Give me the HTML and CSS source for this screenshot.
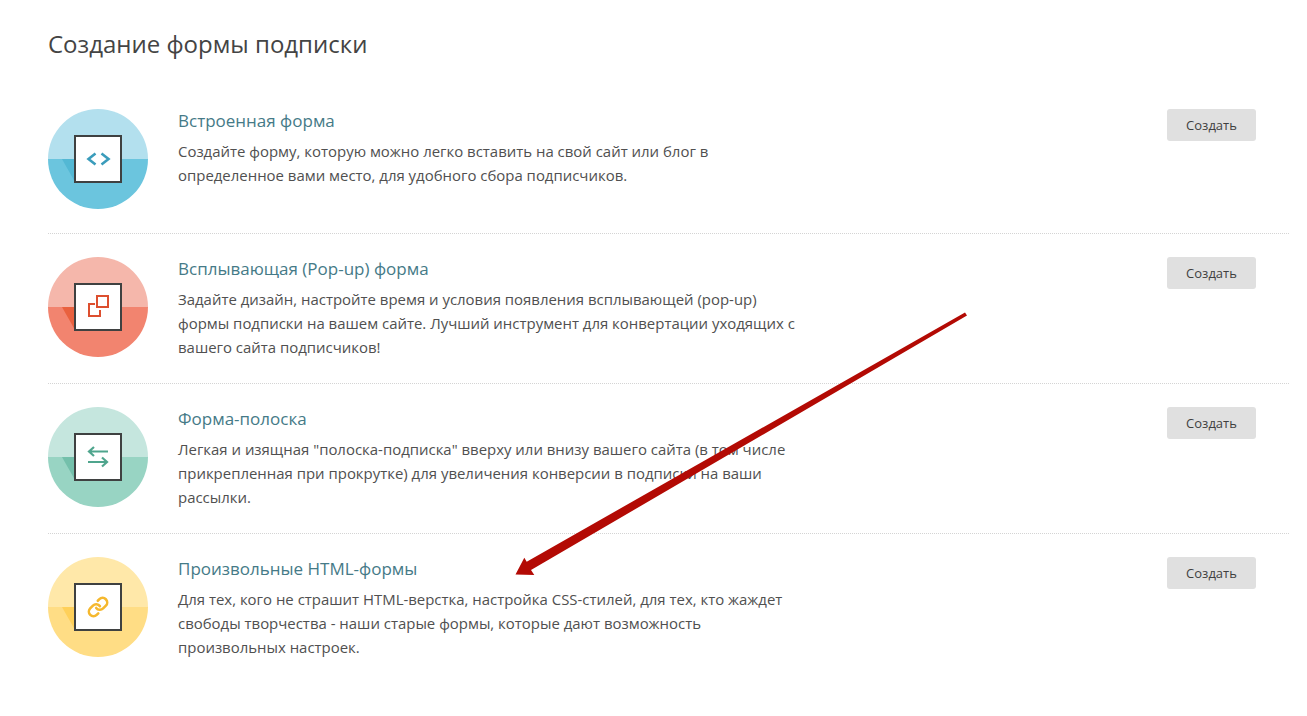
FILE: index.html
```html
<!DOCTYPE html>
<html lang="ru">
<head>
<meta charset="utf-8">
<title>Создание формы подписки</title>
<link rel="stylesheet" href="styles.css">
</head>
<body>
<main class="page">
  <h1 class="heading">Создание формы подписки</h1>
  <ul class="list">
    <li class="row">
      <svg class="badge" viewBox="0 0 100 100" width="100" height="100">
        <defs><clipPath id="c1"><circle cx="50" cy="50" r="50"/></clipPath></defs>
        <g clip-path="url(#c1)">
          <rect width="100" height="50" fill="#b3e0ee"/>
          <rect y="50" width="100" height="50" fill="#6bc5de"/>
          <polygon points="14,50 27,50 27,73" fill="#53b8d4"/>
        </g>
        <rect x="27" y="27" width="46" height="46" fill="#fff" stroke="#3f4141" stroke-width="2"/>
        <path d="M47.500 44.500L40.500 50L47.500 55.500M53.500 44.500L60.500 50L53.500 55.500" fill="none" stroke="#3a9cbb" stroke-width="2.600"/>
      </svg>
      <div class="body">
        <h2 class="title">Встроенная форма</h2>
        <p class="desc">Создайте форму, которую можно легко вставить на свой сайт или блог в определенное вами место, для удобного сбора подписчиков.</p>
      </div>
      <button class="create">Создать</button>
    </li>
    <li class="row">
      <svg class="badge" viewBox="0 0 100 100" width="100" height="100">
        <defs><clipPath id="c2"><circle cx="50" cy="50" r="50"/></clipPath></defs>
        <g clip-path="url(#c2)">
          <rect width="100" height="50" fill="#f5b7ab"/>
          <rect y="50" width="100" height="50" fill="#f2846f"/>
          <polygon points="14,50 27,50 27,73" fill="#e9613f"/>
        </g>
        <rect x="27" y="27" width="46" height="46" fill="#fff" stroke="#3f4141" stroke-width="2"/>
        <path d="M49 39H60V50H49ZM47 47H41V59H52V53" fill="none" stroke="#dd4f2f" stroke-width="2"/>
      </svg>
      <div class="body">
        <h2 class="title">Всплывающая (Pop-up) форма</h2>
        <p class="desc">Задайте дизайн, настройте время и условия появления всплывающей (pop-up) формы подписки на вашем сайте. Лучший инструмент для конвертации уходящих с вашего сайта подписчиков!</p>
      </div>
      <button class="create">Создать</button>
    </li>
    <li class="row">
      <svg class="badge" viewBox="0 0 100 100" width="100" height="100">
        <defs><clipPath id="c3"><circle cx="50" cy="50" r="50"/></clipPath></defs>
        <g clip-path="url(#c3)">
          <rect width="100" height="50" fill="#c5e6de"/>
          <rect y="50" width="100" height="50" fill="#98d4c3"/>
          <polygon points="14,50 27,50 27,73" fill="#74c0ab"/>
        </g>
        <rect x="27" y="27" width="46" height="46" fill="#fff" stroke="#3f4141" stroke-width="2"/>
        <path d="M60 44.500H41M46 40L41 44.500L46 49M40 55H59M54 50.500L59 55L54 59.500" fill="none" stroke="#4fa58d" stroke-width="2.200"/>
      </svg>
      <div class="body">
        <h2 class="title">Форма-полоска</h2>
        <p class="desc">Легкая и изящная "полоска-подписка" вверху или внизу вашего сайта (в том числе прикрепленная при прокрутке) для увеличения конверсии в подписки на ваши рассылки.</p>
      </div>
      <button class="create">Создать</button>
    </li>
    <li class="row">
      <svg class="badge" viewBox="0 0 100 100" width="100" height="100">
        <defs><clipPath id="c4"><circle cx="50" cy="50" r="50"/></clipPath></defs>
        <g clip-path="url(#c4)">
          <rect width="100" height="50" fill="#ffe8a9"/>
          <rect y="50" width="100" height="50" fill="#ffdd85"/>
          <polygon points="14,50 27,50 27,73" fill="#ffd05a"/>
        </g>
        <rect x="27" y="27" width="46" height="46" fill="#fff" stroke="#3f4141" stroke-width="2"/>
        <g transform="translate(39,39) scale(.92)" fill="none" stroke="#f5b82e" stroke-width="2.800" stroke-linecap="round">
          <path d="M10 13a5 5 0 0 0 7.540.540l3-3a5 5 0 0 0-7.070-7.070l-1.720 1.710"/>
          <path d="M14 11a5 5 0 0 0-7.540-.540l-3 3a5 5 0 0 0 7.070 7.070l1.710-1.710"/>
        </g>
      </svg>
      <div class="body">
        <h2 class="title">Произвольные HTML-формы</h2>
        <p class="desc">Для тех, кого не страшит HTML-верстка, настройка CSS-стилей, для тех, кто жаждет свободы творчества - наши старые формы, которые дают возможность произвольных настроек.</p>
      </div>
      <button class="create">Создать</button>
    </li>
  </ul>
</main>
<svg class="arrow" viewBox="0 0 1307 716" width="1307" height="716">
  <polygon points="965,312.500 967,315.500 531,570 534.300,575 515.500,574.500 524.300,557.700 526.700,561.700" fill="#b30a04"/>
</svg>
</body>
</html>
```
FILE: styles.css
```css
html, body {
  margin: 0;
  padding: 0;
  background: #fff;
}
body {
  font-family: "Open Sans", "Liberation Sans", sans-serif;
  color: #4d4d4d;
  overflow: hidden;
}
.page {
  margin-left: 48px;
  width: 1241px;
  padding-top: 27px;
}
.heading {
  margin: 0 0 49px;
  font-size: 24px;
  line-height: 33px;
  font-weight: 400;
  color: #444;
}
.list {
  list-style: none;
  margin: 0;
  padding: 0;
}
.row {
  display: flex;
  align-items: flex-start;
  padding: 23px 33px 24px 0;
  border-bottom: 1px dotted #d4d4d4;
}
.row:first-child {
  padding-top: 0;
}
.row:last-child {
  border-bottom: 0;
}
.badge {
  flex: none;
  display: block;
  margin-right: 30px;
}
.body {
  flex: none;
  width: 625px;
}
.title {
  margin: 0 0 6px;
  font-size: 17px;
  line-height: 24px;
  font-weight: 400;
  color: #457a87;
}
.desc {
  margin: 0;
  font-size: 14.95px;
  line-height: 24px;
  color: #505050;
}
.create {
  margin-left: auto;
  width: 89px;
  height: 32px;
  padding: 0;
  border: 0;
  border-radius: 3px;
  background: #e0e0e0;
  color: #3f3f3f;
  font-family: inherit;
  font-size: 13px;
  font-weight: 400;
}
.arrow {
  position: absolute;
  left: 0;
  top: 0;
  pointer-events: none;
}
```
